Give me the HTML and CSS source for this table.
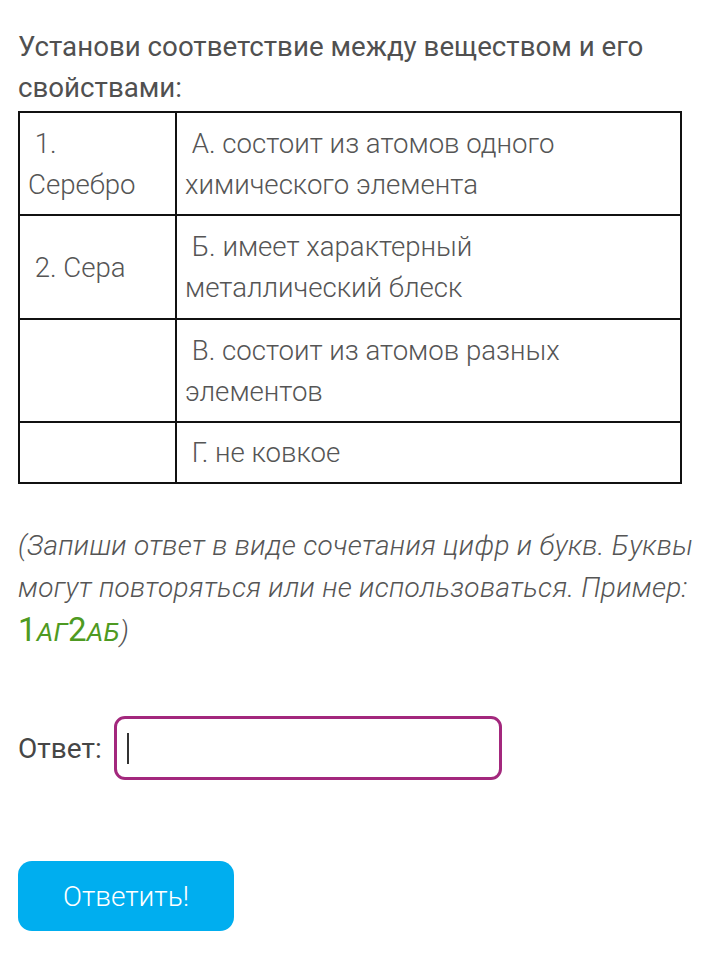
FILE: index.html
```html
<!DOCTYPE html>
<html lang="ru">
<head>
<meta charset="utf-8">
<link rel="stylesheet" href="styles.css">
</head>
<body>
<div class="page">
  <p class="question">Установи соответствие между веществом и его свойствами:</p>
  <table class="match">
    <colgroup><col class="col1"><col class="col2"></colgroup>
    <tr class="r1"><td>&nbsp;1. Серебро</td><td>&nbsp;А. состоит из атомов одного химического элемента</td></tr>
    <tr class="r2"><td>&nbsp;2. Сера</td><td>&nbsp;Б. имеет характерный металлический блеск</td></tr>
    <tr class="r3"><td></td><td>&nbsp;В. состоит из атомов разных элементов</td></tr>
    <tr class="r4"><td></td><td>&nbsp;Г. не ковкое</td></tr>
  </table>
  <p class="hint">(Запиши ответ в виде сочетания цифр и букв. Буквы могут повторяться или не использоваться. Пример: <span class="ex"><span class="d">1</span>АГ<span class="d">2</span>АБ</span>)</p>
  <div class="answer">
    <label class="lbl">Ответ:</label>
    <div class="field"><span class="caret"></span></div>
  </div>
  <button class="submit">Ответить!</button>
</div>
</body>
</html>
```
FILE: styles.css
```css
html, body { margin: 0; padding: 0; background: #fff; }
body { font-family: Roboto, "Noto Sans", sans-serif; color: #4a4a4a; }
.page { padding: 26px 8px 0 18px; }
.question {
  margin: 0;
  width: 664px;
  font-size: 27.7px;
  line-height: 41px;
  font-weight: 400;
  color: #505050;
}
.match {
  margin-top: 3px;
  width: 664px;
  table-layout: fixed;
  border-collapse: collapse;
  border: 2px solid #111;
  font-size: 27.6px;
  line-height: 41px;
  font-weight: 300;
  color: #555;
}
.col1 { width: 157px; }
.match td { border: 2px solid #111; padding: 0 6px 0 8px; vertical-align: middle; }
.r1 { height: 103px; }
.r2 { height: 104px; }
.r3 { height: 103px; }
.r4 { height: 61px; }
.hint {
  margin: 41px 0 0;
  font-size: 28px;
  line-height: 42px;
  font-style: italic;
  font-weight: 300;
  color: #555;
  letter-spacing: 0.3px;
}
.ex { color: #4e9a22; font-size: 26px; font-weight: 400; }
.ex .d { font-style: normal; font-size: 33px; }
.answer { display: flex; align-items: center; margin-top: 63px; gap: 12px; }
.lbl { font-size: 28px; font-weight: 400; color: #464646; }
.field {
  width: 372px; height: 58px;
  border: 3px solid #a3287d;
  border-radius: 11px;
  display: flex; align-items: center;
  padding-left: 10px;
}
.caret { width: 2px; height: 31px; background: #333; }
.submit {
  display: block;
  margin-top: 81px;
  width: 216px; height: 70px;
  border: none; border-radius: 14px;
  background: #00aeef;
  color: #fff;
  font-family: Roboto, sans-serif;
  font-size: 28px; font-weight: 300;
}
```
